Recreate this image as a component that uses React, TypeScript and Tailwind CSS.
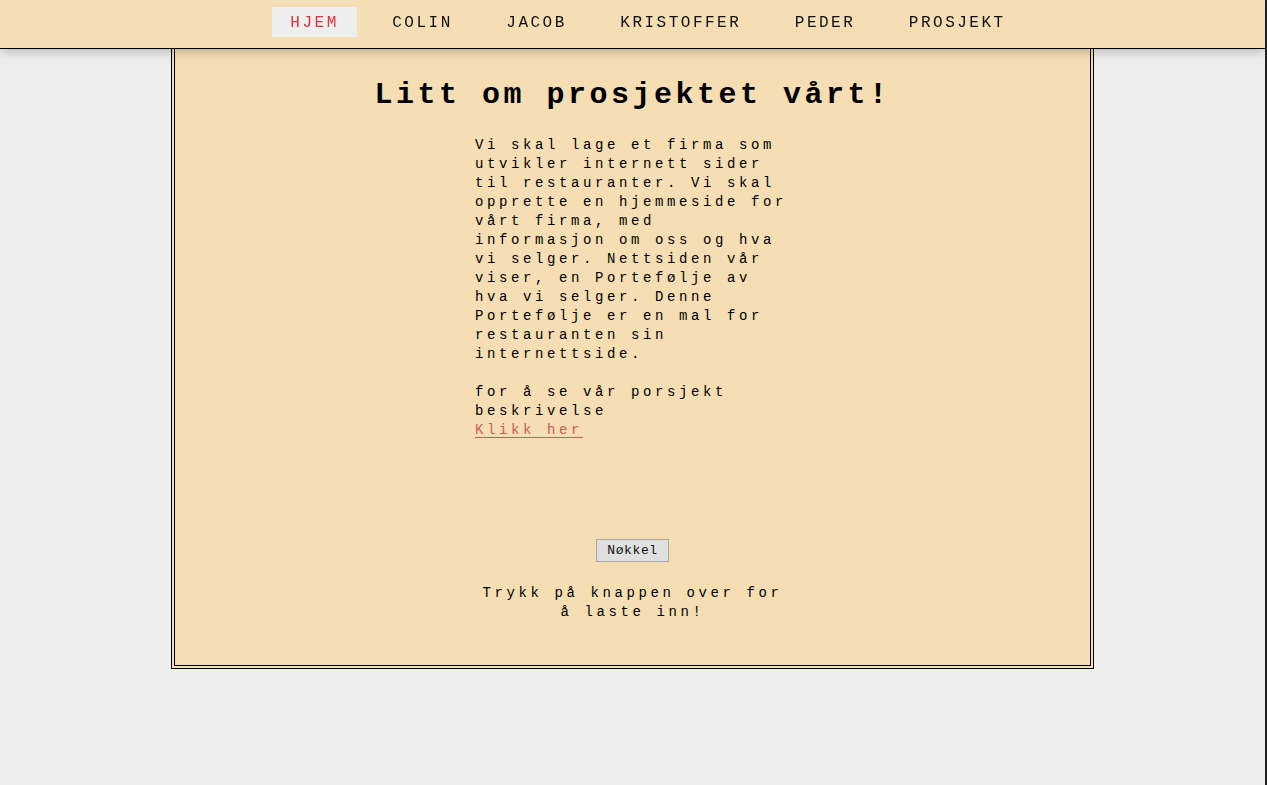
const navItems = ['HJEM', 'COLIN', 'JACOB', 'KRISTOFFER', 'PEDER', 'PROSJEKT'];

function Nav() {
  return (
    <nav className="fixed top-0 left-0 right-[2px] z-10 h-[49px] bg-[#F5DEB3] border-b border-black shadow-[0_3px_10px_rgba(0,0,0,0.22)]">
      <ul className="flex justify-center gap-[17.5px] pl-[31px] pt-[7px]">
        {navItems.map((item, i) => (
          <li
            key={item}
            className={
              i === 0
                ? 'h-[30px] px-[18px] leading-[33px] text-[16px] tracking-[2.5px] bg-[#eeeeee] text-[#e0303c] cursor-pointer'
                : 'h-[30px] px-[18px] leading-[33px] text-[16px] tracking-[2.5px] text-[#111] cursor-pointer'
            }
          >
            {item}
          </li>
        ))}
      </ul>
    </nav>
  );
}

export default function App() {
  return (
    <div
      className="min-h-screen bg-[#eeeeee] border-r-2 border-[#222]"
      style={{ fontFamily: '"Liberation Mono", "Courier New", monospace' }}
    >
      <Nav />
      <main className="mx-auto w-[923px] border-4 border-double border-black bg-[#F5DEB3] pt-[73px] pb-[43px] text-black">
        <h1 className="text-center text-[30px] leading-[36px] font-bold tracking-[3.5px]">Litt om prosjektet vårt!</h1>
        <p className="mt-[23px] ml-[300px] w-[318px] text-[14px] leading-[19px] tracking-[3.6px]">
          Vi skal lage et firma som utvikler internett sider til restauranter. Vi skal opprette en hjemmeside for vårt
          firma, med informasjon om oss og hva vi selger. Nettsiden vår viser, en Portefølje av hva vi selger. Denne
          Portefølje er en mal for restauranten sin internettside.
          <br />
          <br />
          for å se vår porsjekt beskrivelse
          <br />
          <a href="#" className="text-[#cd5c5c] underline decoration-[#e05050] underline-offset-[3px]">
            Klikk her
          </a>
        </p>
        <div className="mt-[99px] flex justify-center">
          <button className="h-[23px] w-[73px] border border-[#a8a8a8] bg-[#e0e0e0] text-[13px] tracking-[0.6px] text-[#111]">
            Nøkkel
          </button>
        </div>
        <p className="mx-auto mt-[22px] w-[318px] text-center text-[14px] leading-[19px] tracking-[3.6px]">
          Trykk på knappen over for å laste inn!
        </p>
      </main>
    </div>
  );
}
